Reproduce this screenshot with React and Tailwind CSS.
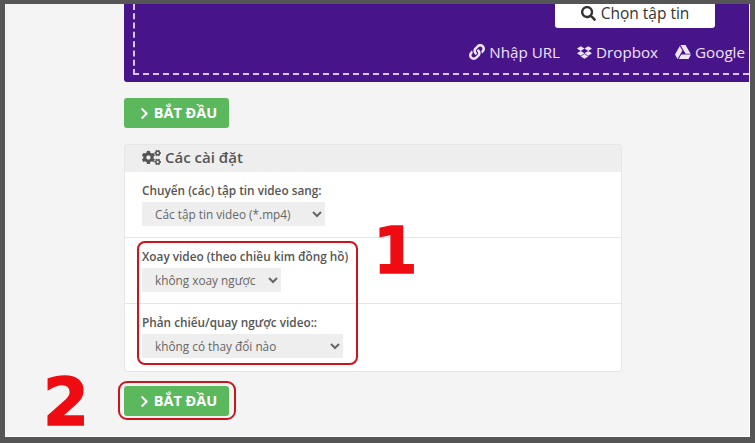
import React from "react";
import { FaChevronRight, FaCogs, FaDropbox, FaGoogleDrive, FaLink, FaSearch } from "react-icons/fa";

const StartButton = () => (
    <button className="flex h-[30px] w-[105px] items-center justify-center gap-[3px] rounded-[3px] bg-[#5cb85c] pl-[2px] text-[14.5px] font-bold text-white">
        <FaChevronRight className="text-[13px]" />
        BẮT ĐẦU
    </button>
);

const Field = ({ label, width, children, className }) => (
    <div className={className}>
        <div className="text-[11.8px] leading-[17px] font-semibold text-[#555]">{label}</div>
        <select className={`mt-[3px] h-[24px] ${width} bg-[#eee] pl-[9px] text-[11.8px] text-[#666]`}>
            <option>{children}</option>
        </select>
    </div>
);

export default function App() {
    return (
        <div className="relative h-[443px] w-[755px] overflow-hidden bg-[#555] pt-[4px] pr-[5px] pb-[6px] pl-[5px] font-['Open_Sans',sans-serif]">
            <div className="h-[433px] overflow-hidden border-r border-b border-white bg-[#f4f4f4] pl-[119px]">
                <div className="h-[78px] rounded-bl-[3px] bg-[#48148a] pb-[7px] pl-[9px]">
                    <div className="flex h-[71px] flex-col items-end border-b-2 border-l-2 border-dashed border-[#d9c6ef] pr-[4px]">
                        <button className="mr-[30px] flex h-[24px] w-[160px] items-start justify-center gap-[5px] rounded-b-[3px] bg-white text-[15.5px] leading-[18px] text-[#333]">
                            <FaSearch className="mt-[2px] text-[15px]" />
                            Chọn tập tin
                        </button>
                        <div className="mt-[12px] flex items-center gap-[17px] text-[15.2px] leading-[24px] text-[#eee5f7]">
                            <span className="flex items-center gap-[4px]"><FaLink className="text-[16px]" />Nhập URL</span>
                            <span className="flex items-center gap-[4px]"><FaDropbox className="text-[15px]" />Dropbox</span>
                            <span className="flex items-center gap-[4px]"><FaGoogleDrive className="text-[16px]" />Google</span>
                        </div>
                    </div>
                </div>

                <div className="mt-[16px]"><StartButton /></div>

                <div className="mt-[16px] w-[498px] rounded-[3px] border border-[#e6e6e6] bg-white">
                    <div className="flex h-[27px] items-center gap-[4px] bg-[#eee] pb-[3px] pl-[17px] text-[15px] font-semibold text-[#555]">
                        <FaCogs className="text-[19px]" />
                        Các cài đặt
                    </div>
                    <Field label="Chuyển (các) tập tin video sang:" width="w-[183px]" className="h-[66px] border-b border-[#e6e6e6] pt-[10px] pl-[17px]">
                        Các tập tin video (*.mp4)
                    </Field>
                    <Field label="Xoay video (theo chiều kim đồng hồ)" width="w-[139px]" className="h-[66px] border-b border-[#e6e6e6] pt-[10px] pl-[17px]">
                        không xoay ngược
                    </Field>
                    <Field label="Phản chiếu/quay ngược video::" width="w-[201px]" className="h-[67px] pt-[10px] pl-[17px]">
                        không có thay đổi nào
                    </Field>
                </div>

                <div className="mt-[14px]"><StartButton /></div>
            </div>

            {/* annotations */}
            <div className="absolute top-[241px] left-[137px] h-[124px] w-[221px] rounded-[8px] border-2 border-[#d0121b]"></div>
            <div className="absolute top-[381px] left-[118px] h-[39px] w-[118px] rounded-[9px] border-2 border-[#d0121b]"></div>
            <div className="absolute top-[211px] left-[373px] font-['DejaVu_Sans',sans-serif] text-[64px] leading-[80px] font-bold text-[#ee0c12] [-webkit-text-stroke:1.5px_#ee0c12]">1</div>
            <div className="absolute top-[368px] left-[43px] font-['DejaVu_Sans',sans-serif] text-[66px] leading-[70px] font-bold text-[#ee0c12] [-webkit-text-stroke:1.5px_#ee0c12]">2</div>
        </div>
    );
}
